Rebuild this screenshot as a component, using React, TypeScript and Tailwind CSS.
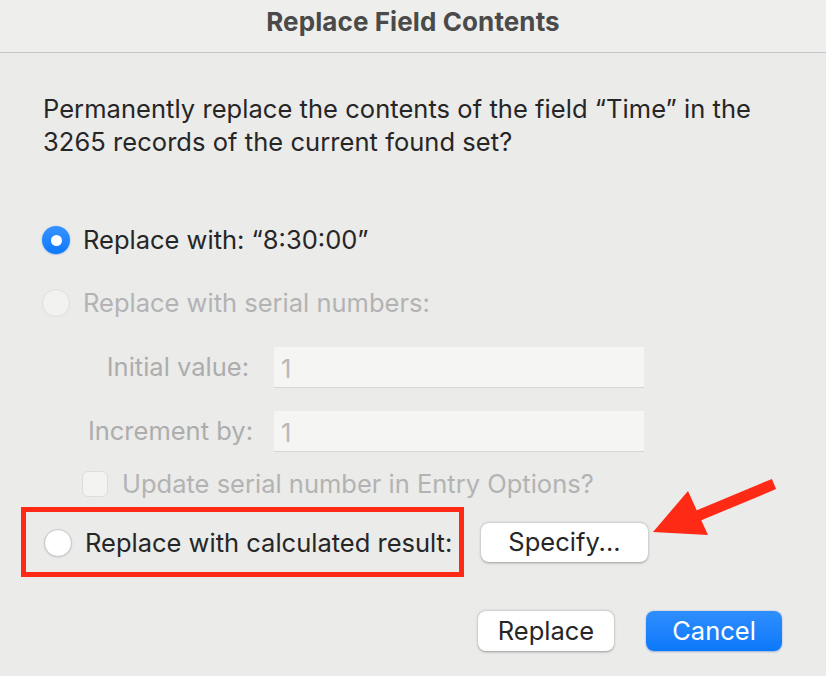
import React from "react";

const font = { fontFamily: "Inter, 'Noto Sans', 'Liberation Sans', sans-serif" };

function Radio({ kind }: { kind: "on" | "off" | "disabled" }) {
  if (kind === "on")
    return (
      <div className="w-[28px] h-[28px] rounded-full bg-gradient-to-b from-[#3593ff] to-[#0a78fb] flex items-center justify-center shadow-[0_0.5px_1.5px_rgba(0,90,220,0.5)] shrink-0">
        <div className="w-[11px] h-[11px] rounded-full bg-white" />
      </div>
    );
  if (kind === "disabled")
    return <div className="w-[28px] h-[28px] rounded-full bg-[#f2f2f1] border border-[#dedede] shrink-0" />;
  return <div className="w-[28px] h-[28px] rounded-full bg-white border border-[#c9c9c9] shadow-[0_0.5px_1.5px_rgba(0,0,0,0.15)] shrink-0" />;
}

export default function App() {
  return (
    <div className="relative w-[826px] h-[676px] bg-[#ebebea] overflow-hidden text-[#262626]" style={font}>
      <div className="h-[52px] bg-[#eeeeec] border-b border-[#c6c6c6] flex items-center justify-center box-content">
        <span className="text-[26px] leading-[30px] font-bold text-[#4a4a4a] tracking-[0.1px] -mt-[8px]">Replace Field Contents</span>
      </div>

      <div className="pl-[43px] flex flex-col text-[25.5px]">
        <p className="mt-[39px] leading-[33px] w-[780px] tracking-[0.05px]">
          Permanently replace the contents of the field “Time” in the
          <br />
          3265 records of the current found set?
        </p>

        <div className="mt-[68px] h-[28px] flex items-center gap-[13px] -ml-[1px]">
          <Radio kind="on" />
          <span>Replace with: “8:30:00”</span>
        </div>

        <div className="mt-[35px] h-[28px] flex items-center gap-[13px] -ml-[1px]">
          <Radio kind="disabled" />
          <span className="text-[#b3b3b3]">Replace with serial numbers:</span>
        </div>

        <div className="mt-[30px] h-[40px] flex items-center">
          <div className="w-[209px] text-right text-[#adadad] pr-[3px]">Initial value:</div>
          <div className="ml-[22px] w-[370px] h-[40px] bg-[#f5f5f4] shadow-[0_1px_0_#d6d6d6] flex items-center pl-[7px] pt-[4px] text-[#b8b8b8]">1</div>
        </div>

        <div className="mt-[24px] h-[40px] flex items-center">
          <div className="w-[210px] text-right text-[#adadad]">Increment by:</div>
          <div className="ml-[21px] w-[370px] h-[40px] bg-[#f5f5f4] shadow-[0_1px_0_#d6d6d6] flex items-center pl-[7px] pt-[4px] text-[#b8b8b8]">1</div>
        </div>

        <div className="mt-[20px] h-[26px] flex items-center gap-[14px] ml-[39px]">
          <div className="w-[26px] h-[26px] rounded-[6px] bg-[#f3f3f2] border border-[#dcdcdc] shrink-0" />
          <span className="text-[#b3b3b3]">Update serial number in Entry Options?</span>
        </div>

        <div className="mt-[10px] -ml-[22px] flex items-center">
          <div className="w-[443px] h-[70px] border-[5px] border-[#ff2a16] flex items-center gap-[13px] pl-[18px] pt-[2px] whitespace-nowrap">
            <Radio kind="off" />
            <span>Replace with calculated result:</span>
          </div>
          <button className="ml-[17px] mt-[1px] w-[167px] h-[39px] rounded-[8px] bg-white shadow-[0_0.5px_2.5px_rgba(0,0,0,0.35)] text-[#262626] flex items-center justify-center">
            Specify...
          </button>
        </div>

        <div className="mt-[34px] flex justify-end pr-[44px] gap-[32px]">
          <button className="w-[136px] h-[40px] rounded-[8px] bg-white shadow-[0_0.5px_2.5px_rgba(0,0,0,0.35)] text-[#262626] flex items-center justify-center">
            Replace
          </button>
          <button className="w-[136px] h-[40px] rounded-[8px] bg-gradient-to-b from-[#2e8efc] to-[#0a78fa] shadow-[0_0.5px_2px_rgba(0,60,160,0.35)] text-white flex items-center justify-center">
            Cancel
          </button>
        </div>
      </div>

      <svg className="absolute left-0 top-0 pointer-events-none" width="826" height="676">
        <line x1="774" y1="484" x2="695" y2="517" stroke="#ff2a16" strokeWidth="11" />
        <polygon points="653,532 688,491 708,535" fill="#ff2a16" />
      </svg>
    </div>
  );
}
